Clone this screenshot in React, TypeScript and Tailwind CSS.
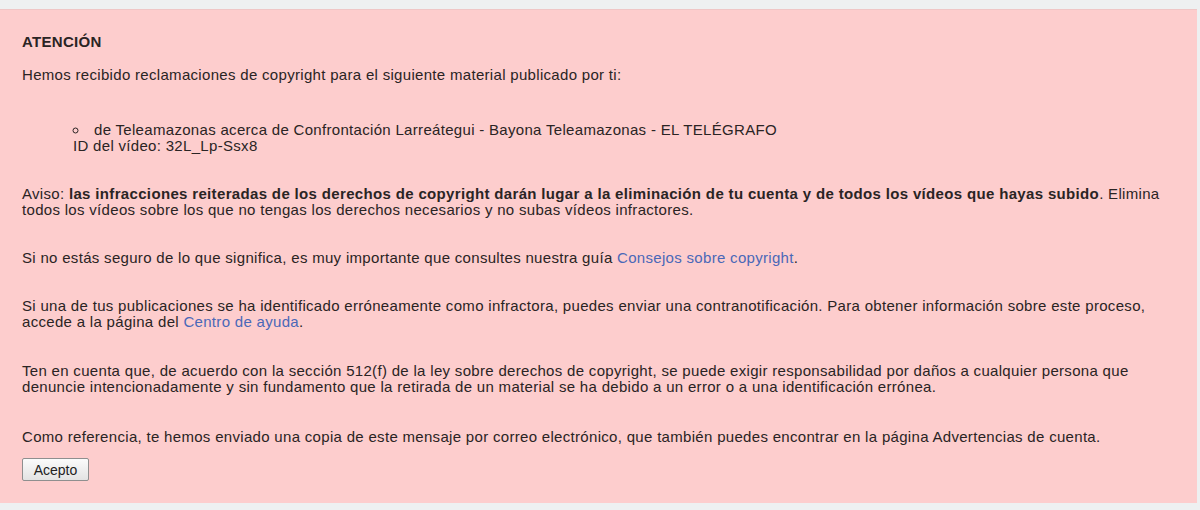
import React from "react";

function Enlace({ children }: { children: React.ReactNode }) {
  return <a href="#" className="text-[#4a68b8]">{children}</a>;
}

export default function App() {
  return (
    <div className="h-[510px] w-[1200px] overflow-hidden bg-[#eef0f1] font-['Liberation_Sans',Arial,sans-serif] text-[15px] leading-4 tracking-[0.31px] text-[#2a2424]">
      <div className="h-[9px]" />
      <div className="mr-[3px] h-[494px] border-t border-[#efc6c6] bg-[#fdcdcd] pl-[22px] pr-[22px] pt-6">
        <h1 className="font-bold tracking-[0.3px]">ATENCIÓN</h1>
        <p className="mt-[17px]">
          Hemos recibido reclamaciones de copyright para el siguiente material publicado por ti:
        </p>
        <ul className="mt-[39px] list-inside pl-[51px] [list-style-type:circle]">
          <li>
            de Teleamazonas acerca de Confrontación Larreátegui - Bayona Teleamazonas - EL TELÉGRAFO
            <br />
            ID del vídeo: 32L_Lp-Ssx8
          </li>
        </ul>
        <p className="mt-8">
          Aviso:{" "}
          <b className="tracking-[0.34px]">
            las infracciones reiteradas de los derechos de copyright darán lugar a la eliminación de tu
            cuenta y de todos los vídeos que hayas subido
          </b>
          . Elimina todos los vídeos sobre los que no tengas los derechos necesarios y no subas vídeos
          infractores.
        </p>
        <p className="mt-8">
          Si no estás seguro de lo que significa, es muy importante que consultes nuestra guía{" "}
          <Enlace>Consejos sobre copyright</Enlace>.
        </p>
        <p className="mt-8">
          Si una de tus publicaciones se ha identificado erróneamente como infractora, puedes enviar una
          contranotificación. Para obtener información sobre este proceso, accede a la página del{" "}
          <Enlace>Centro de ayuda</Enlace>.
        </p>
        <p className="mt-[33px]">
          Ten en cuenta que, de acuerdo con la sección 512(f) de la ley sobre derechos de copyright, se
          puede exigir responsabilidad por daños a cualquier persona que denuncie intencionadamente y
          sin fundamento que la retirada de un material se ha debido a un error o a una identificación
          errónea.
        </p>
        <p className="mt-[34px]">
          Como referencia, te hemos enviado una copia de este mensaje por correo electrónico, que
          también puedes encontrar en la página Advertencias de cuenta.
        </p>
        <button className="mt-[13px] h-[23px] w-[67px] rounded-[2px] border border-[#8f8f8f] bg-gradient-to-b from-[#fbfbfb] to-[#e3e3e3] text-[14px] tracking-normal text-[#222]">
          Acepto
        </button>
      </div>
    </div>
  );
}
